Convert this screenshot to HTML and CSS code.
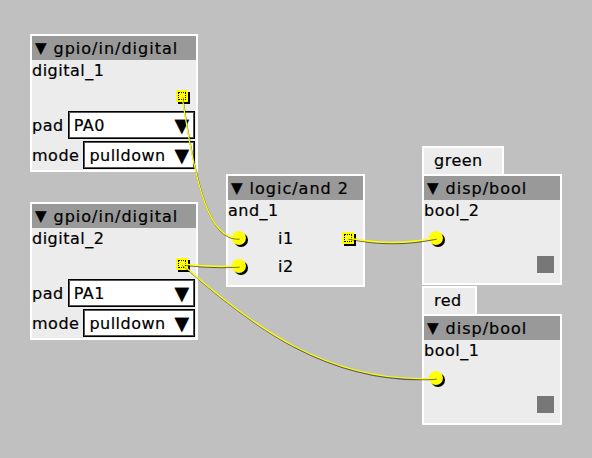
FILE: index.html
```
<!DOCTYPE html>
<html lang="en">
<head>
  <meta charset="UTF-8">
  <title>Patch</title>
  <link rel="stylesheet" href="styles.css">
</head>
<body>
  <div class="canvas">

    <!-- gpio input 1 -->
    <div class="obj gpio gpio-1">
      <div class="obj-head"><span class="tri">▼</span>gpio/in/digital</div>
      <div class="obj-name">digital_1</div>
      <div class="out-row"><span class="outlet"></span></div>
      <div class="param-row">
        <span class="param-label">pad</span>
        <div class="select"><span>PA0</span><span class="arrow">▼</span></div>
      </div>
      <div class="param-row second">
        <span class="param-label">mode</span>
        <div class="select"><span>pulldown</span><span class="arrow">▼</span></div>
      </div>
    </div>

    <!-- gpio input 2 -->
    <div class="obj gpio gpio-2">
      <div class="obj-head"><span class="tri">▼</span>gpio/in/digital</div>
      <div class="obj-name">digital_2</div>
      <div class="out-row"><span class="outlet"></span></div>
      <div class="param-row">
        <span class="param-label">pad</span>
        <div class="select"><span>PA1</span><span class="arrow">▼</span></div>
      </div>
      <div class="param-row second">
        <span class="param-label">mode</span>
        <div class="select"><span>pulldown</span><span class="arrow">▼</span></div>
      </div>
    </div>

    <!-- and gate -->
    <div class="obj logic">
      <div class="obj-head"><span class="tri">▼</span>logic/and 2</div>
      <div class="obj-name tall">and_1</div>
      <div class="io-row">
        <span class="inlet"></span><span class="io-label">i1</span>
        <span class="outlet push"></span>
      </div>
      <div class="io-row">
        <span class="inlet"></span><span class="io-label">i2</span>
      </div>
    </div>

    <!-- displays -->
    <div class="disp disp-green">
      <div class="tab tab-green">green</div>
      <div class="obj disp-box">
        <div class="obj-head"><span class="tri">▼</span>disp/bool</div>
        <div class="obj-name">bool_2</div>
        <div class="in-row"><span class="inlet"></span></div>
        <div class="led-row"><span class="led"></span></div>
      </div>
    </div>

    <div class="disp disp-red">
      <div class="tab tab-red">red</div>
      <div class="obj disp-box">
        <div class="obj-head"><span class="tri">▼</span>disp/bool</div>
        <div class="obj-name">bool_1</div>
        <div class="in-row"><span class="inlet"></span></div>
        <div class="led-row"><span class="led"></span></div>
      </div>
    </div>

    <!-- wires -->
    <svg class="wires" width="592" height="458" viewBox="0 0 592 458">
      <g class="wire-shadow" transform="translate(0.5 1)">
        <path d="M182 96 C196 190, 210 240, 239 238"/>
        <path d="M182 264 C205 267, 220 267, 239 266"/>
        <path d="M348 238 C380 244, 405 244, 436 238"/>
        <path d="M182 264 C250 325, 330 385, 436 378"/>
      </g>
      <g class="wire">
        <path d="M182 96 C196 190, 210 240, 239 238"/>
        <path d="M182 264 C205 267, 220 267, 239 266"/>
        <path d="M348 238 C380 244, 405 244, 436 238"/>
        <path d="M182 264 C250 325, 330 385, 436 378"/>
      </g>
    </svg>
  </div>
</body>
</html>
```

FILE: styles.css
```
body {
  margin: 0;
  background: #c0c0c0;
  font-family: "DejaVu Sans", sans-serif;
  font-size: 16px;
  letter-spacing: 0.5px;
  color: #000;
  -webkit-text-stroke: 0.2px #000;
}
.canvas {
  position: relative;
  width: 592px;
  height: 458px;
  overflow: hidden;
}
.obj {
  position: absolute;
  background: #ececec;
  border: 2px solid #fff;
  display: flex;
  flex-direction: column;
}
.obj-head {
  height: 24px;
  background: #999;
  display: flex;
  align-items: center;
  padding-left: 3px;
  letter-spacing: 1px;
}
.tri {
  font-size: 15px;
  margin-right: 7px;
  letter-spacing: 0;
}
.obj-name {
  height: 22px;
  line-height: 22px;
}
.obj-name.tall {
  height: 24px;
}

/* gpio */
.gpio {
  left: 30px;
  width: 164px;
  height: 134px;
}
.gpio-1 { top: 34px; }
.gpio-2 { top: 202px; }
.out-row {
  height: 28px;
  display: flex;
  align-items: center;
  justify-content: flex-end;
  padding-right: 8px;
}
.param-row {
  display: flex;
  align-items: center;
  gap: 4px;
  height: 28px;
  margin-top: 1px;
  padding-right: 1px;
}
.param-row.second {
  margin-top: 2px;
}
.select {
  flex: 1;
  height: 28px;
  box-sizing: border-box;
  border: 1px solid #000;
  box-shadow: inset 0 0 0 1px #555;
  background: #fff;
  display: flex;
  align-items: center;
  justify-content: space-between;
  padding: 0 5px 0 5px;
}
.arrow {
  font-size: 19px;
  letter-spacing: 0;
}

/* ports */
.outlet {
  position: relative;
  width: 12px;
  height: 12px;
  background: #ff0;
  box-shadow: 2px 2px 0 #000;
}
.outlet::after {
  content: "";
  position: absolute;
  left: 2px;
  top: 2px;
  width: 6px;
  height: 6px;
  border: 1px dotted #000;
}
.inlet {
  width: 14px;
  height: 14px;
  border-radius: 50%;
  background: #ff0;
  box-shadow: 2px 2px 0 #000;
}

/* logic */
.logic {
  left: 226px;
  top: 174px;
  width: 135px;
  height: 109px;
}
.io-row {
  display: flex;
  align-items: center;
  height: 28px;
}
.io-row .inlet {
  margin-left: 4px;
}
.io-label {
  margin-left: 32px;
}
.push {
  margin-left: auto;
  margin-right: 9px;
}

/* displays */
.disp {
  position: absolute;
  left: 422px;
  display: flex;
  flex-direction: column;
  align-items: flex-start;
}
.disp-green { top: 146px; }
.disp-red { top: 286px; }
.tab {
  height: 26px;
  line-height: 26px;
  background: #ececec;
  border: 2px solid #fff;
  border-bottom: 0;
  padding-left: 10px;
  box-sizing: content-box;
}
.tab-green { width: 68px; }
.tab-red { width: 41px; }
.disp-box {
  position: static;
  width: 136px;
  height: 107px;
}
.in-row {
  height: 32px;
  display: flex;
  align-items: center;
  padding-left: 5px;
}
.led-row {
  display: flex;
  justify-content: flex-end;
  padding-right: 6px;
  margin-top: 2px;
}
.led {
  width: 17px;
  height: 17px;
  background: #777;
}

/* wires */
.wires {
  position: absolute;
  left: 0;
  top: 0;
  pointer-events: none;
}
.wires path {
  fill: none;
}
.wire-shadow path {
  stroke: #000;
  stroke-opacity: 0.55;
  stroke-width: 1.5;
}
.wire path {
  stroke: #ffff00;
  stroke-width: 1.3;
}
```
